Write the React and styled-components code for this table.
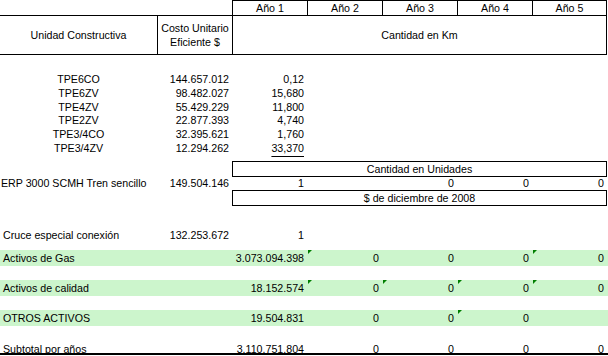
import React from 'react'
import styled, { createGlobalStyle } from 'styled-components'

const GlobalStyle = createGlobalStyle`
  html, body {
    margin: 0;
    padding: 0;
    background: #fff;
  }
  body {
    font-family: "Liberation Sans", Arial, sans-serif;
    font-size: 8pt;
    color: #000;
  }
`

const Sheet = styled.div`
  width: 608px;
  height: 356px;
  overflow: hidden;
  display: flex;
  flex-direction: column;
`

// A = unidad, B = costo, C..G = años, last 1px filler
const Row = styled.div`
  display: grid;
  grid-template-columns: 157px repeat(6, 75px) 1fr;
  flex-shrink: 0;
  box-sizing: border-box;
  height: ${p => p.$h}px;
  margin-top: ${p => p.$gap || 0}px;
  background: ${p => (p.$green ? '#ccf5cc' : 'transparent')};
  border-bottom: ${p => (p.$total ? '2px solid #000' : 'none')};
`

const Cell = styled.div`
  position: relative;
  grid-column: ${p => p.$col} / span ${p => p.$span || 1};
  display: flex;
  align-items: center;
  justify-content: ${p =>
    p.$align === 'left' ? 'flex-start' : p.$align === 'center' ? 'center' : 'flex-end'};
  text-align: ${p => p.$align || 'right'};
  padding: 0 3px 0 ${p => (p.$indent ?? 3)}px;
  white-space: nowrap;
  line-height: 14px;
  min-width: 0;
  text-decoration: ${p => (p.$underline ? 'underline' : 'none')};
  text-underline-offset: 4px;
`

const Framed = styled(Cell)`
  box-sizing: border-box;
  border-top: 1px solid #000;
  border-bottom: ${p => (p.$open ? 'none' : '1px solid #000')};
  border-left: ${p => (p.$noLeft ? 'none' : '1px solid #000')};
  border-right: ${p => (p.$right ? '1px solid #000' : 'none')};
`

const Marker = styled.span`
  position: absolute;
  top: 0;
  left: 1px;
  width: 0;
  height: 0;
  border-top: 4px solid #008000;
  border-right: 4px solid transparent;
`

const years = ['Año 1', 'Año 2', 'Año 3', 'Año 4', 'Año 5']

const tpe = [
  ['TPE6CO', '144.657.012', '0,12', 14],
  ['TPE6ZV', '98.482.027', '15,680', 14],
  ['TPE4ZV', '55.429.229', '11,800', 13],
  ['TPE2ZV', '22.877.393', '4,740', 14],
  ['TPE3/4CO', '32.395.621', '1,760', 14],
  ['TPE3/4ZV', '12.294.262', '33,370', 14],
]

const activos = [
  { label: 'Activos de Gas', total: '3.073.094.398', vals: ['0', '0', '0', '0'], marks: [0, 3], gap: 8 },
  { label: 'Activos de calidad', total: '18.152.574', vals: ['0', '0', '0', '0'], marks: [0, 1, 2, 3], gap: 14 },
  { label: 'OTROS ACTIVOS', total: '19.504.831', vals: ['0', '0', '0', ''], marks: [2], gap: 14 },
]

function SpanBox({ children }) {
  return (
    <Row $h={15} $gap={0}>
      <Framed $col={3} $span={5} $align="center" $right>{children}</Framed>
    </Row>
  )
}

export default function App() {
  return (
    <Sheet>
      <GlobalStyle />

      <Row $h={15}>
        {years.map((y, i) => (
          <Framed key={y} $col={3 + i} $align="center" $open $right={i === 4}>{y}</Framed>
        ))}
      </Row>

      <Row $h={40}>
        <Framed $col={1} $align="center" $noLeft>Unidad Constructiva</Framed>
        <Framed $col={2} $align="center">Costo Unitario<br />Eficiente $</Framed>
        <Framed $col={3} $span={5} $align="center" $right>Cantidad en Km</Framed>
      </Row>

      {tpe.map(([name, cost, qty, h], i) => (
        <Row key={name} $h={h} $gap={i === 0 ? 17 : 0}>
          <Cell $col={1} $align="center">{name}</Cell>
          <Cell $col={2}>{cost}</Cell>
          <Cell $col={3} $underline={i === tpe.length - 1}>{qty}</Cell>
        </Row>
      ))}

      <Row $h={6} />
      <SpanBox>Cantidad en Unidades</SpanBox>

      <Row $h={14}>
        <Cell $col={1} $align="left" $indent={1}>ERP 3000 SCMH Tren sencillo</Cell>
        <Cell $col={2}>149.504.146</Cell>
        <Cell $col={3}>1</Cell>
        <Cell $col={5}>0</Cell>
        <Cell $col={6}>0</Cell>
        <Cell $col={7}>0</Cell>
      </Row>

      <Row $h={16}>
        <Framed $col={3} $span={5} $align="center" $right>$ de diciembre de 2008</Framed>
      </Row>

      <Row $h={14} $gap={22}>
        <Cell $col={1} $align="left">Cruce especial conexión</Cell>
        <Cell $col={2}>132.253.672</Cell>
        <Cell $col={3}>1</Cell>
      </Row>

      {activos.map(a => (
        <Row key={a.label} $h={16} $gap={a.gap} $green>
          <Cell $col={1} $align="left">{a.label}</Cell>
          <Cell $col={3}>{a.total}</Cell>
          {a.vals.map((v, i) => (
            <Cell key={i} $col={4 + i}>
              {a.marks.includes(i) && <Marker />}
              {v}
            </Cell>
          ))}
        </Row>
      ))}

      <Row $h={13} $gap={16} $total>
        <Cell $col={1} $align="left">Subtotal por años</Cell>
        <Cell $col={3}>3.110.751.804</Cell>
        {['0', '0', '0', '0'].map((v, i) => (
          <Cell key={i} $col={4 + i}>{v}</Cell>
        ))}
      </Row>
    </Sheet>
  )
}
